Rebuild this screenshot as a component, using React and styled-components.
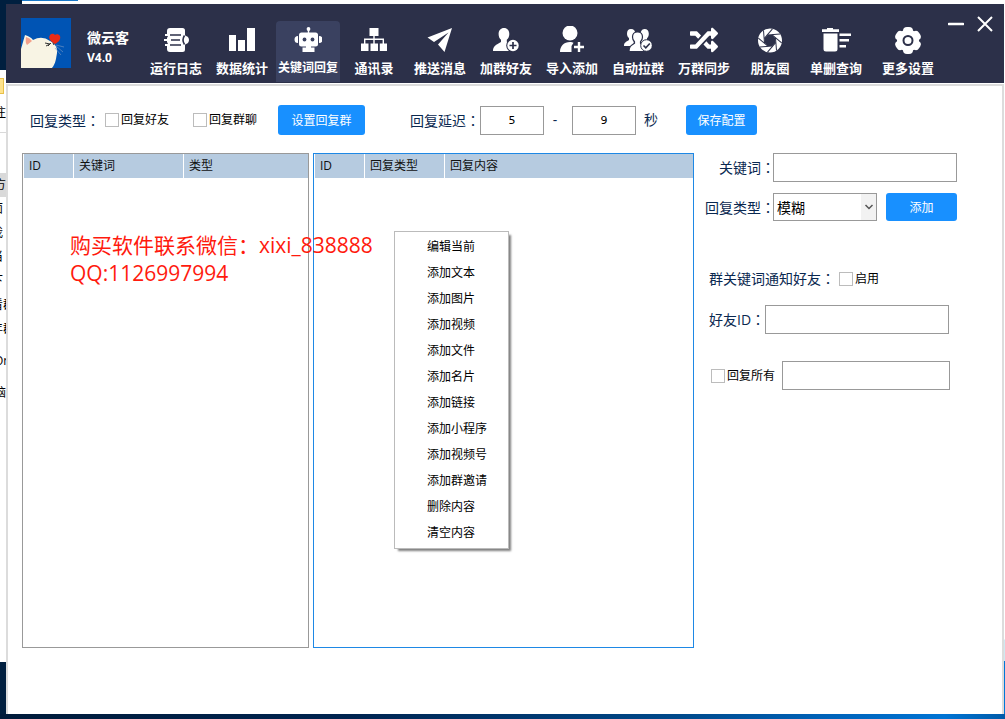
import React, { useState } from "react";
import styled, { createGlobalStyle } from "styled-components";
import { FaRandom } from "react-icons/fa";

const BAR = "#2c3049";

const LogIcon = () => (
  <svg width="28" height="28" viewBox="0 0 28 28">
    <path fill="#fff" d="M8 2h12.500a2.500 2.500 0 0 1 2.500 2.500V8.500a1.500 1.500 0 0 0 1 1.500c4 1 4 7 0 8a1.500 1.500 0 0 0-1 1.500v4a2.500 2.500 0 0 1-2.500 2.500H8a3 3 0 0 1-3-3v-3l1-2-1-2v-4l1-2-1-2V5a3 3 0 0 1 3-3z" />
    <path stroke={BAR} strokeWidth="1.600" fill="none" d="M7 9h12M9 14h9M7 19h12M22.500 9.500c-2 3-2 6 0 9" />
    <path stroke="#fff" strokeWidth="1.800" d="M3 9h5M2 14h6M3 19h5" />
  </svg>
);

const BarsIcon = () => (
  <svg width="28" height="28" viewBox="0 0 28 28" fill="#fff">
    <rect x="1" y="9" width="7" height="16" />
    <rect x="10" y="14" width="7" height="11" />
    <rect x="19" y="2" width="8" height="23" />
  </svg>
);

const RobotIcon = () => (
  <svg width="28" height="28" viewBox="0 0 28 28" fill="#fff">
    <circle cx="14.500" cy="3" r="1.900" />
    <rect x="13.800" y="3" width="1.400" height="4" />
    <rect x="5" y="6.500" width="19" height="14" rx="2.500" />
    <path d="M4 10v7a3.500 3.500 0 0 1 0-7zM25 10v7a3.500 3.500 0 0 0 0-7z" />
    <circle cx="10.500" cy="13.500" r="1.900" fill="#3a4160" />
    <circle cx="18.500" cy="13.500" r="1.900" fill="#3a4160" />
    <path d="M12 20h5v1.500h3.500V26h-12v-4.500H12z" />
  </svg>
);

const TreeIcon = () => (
  <svg width="28" height="28" viewBox="0 0 28 28" fill="#fff">
    <rect x="9.500" y="2" width="9" height="8" />
    <path d="M13.300 10h1.400v8h-1.400zM4 12.500h20V18h-1.400v-4H5.400v4H4z" />
    <rect x="1" y="17.500" width="7.500" height="7.500" />
    <rect x="10.500" y="17.500" width="7.500" height="7.500" />
    <rect x="19.800" y="17.500" width="7.200" height="7.500" />
  </svg>
);

const PlaneIcon = () => (
  <svg width="28" height="28" viewBox="0 0 28 28" fill="#fff">
    <path d="M26 2L1.500 11.500L8 16L22.500 6.500L12 18.500L18.500 26z" />
  </svg>
);

const FriendIcon = () => (
  <svg width="28" height="28" viewBox="0 0 28 28" fill="#fff">
    <path d="M12 2c3.300 0 5.300 2.500 5.300 6 0 2.500-1 4.600-2.500 5.800v2l3.200 2V25H1c0-5 3-6 8-9v-2.200C7.500 12.600 6.600 10.500 6.600 8c0-3.500 2.100-6 5.400-6z" />
    <circle cx="21" cy="19.500" r="6.800" fill={BAR} />
    <circle cx="21" cy="19.500" r="5.700" />
    <path stroke={BAR} strokeWidth="1.700" d="M17.500 19.500h7M21 16v7" />
  </svg>
);

const ImportIcon = () => (
  <svg width="28" height="28" viewBox="0 0 28 28" fill="#fff">
    <circle cx="12" cy="7" r="7.500" />
    <path d="M2 26c0-6 4-10 10-10 1.500 0 2.500.3 3.500.8L13.500 20v6z" />
    <path stroke="#fff" strokeWidth="2.400" d="M16 21h10M21 16v10" />
  </svg>
);

const GroupIcon = () => (
  <svg width="28" height="28" viewBox="0 0 28 28" fill="#fff">
    <path d="M7 3c2.800 0 4.300 2 4.300 4.700 0 2-.8 3.500-1.800 4.500L10 20H0c0-3.500 2-4 5-6v-2C3.700 11 3 9.500 3 7.700 3 5 4.200 3 7 3zM20.500 3c2.800 0 4.300 2 4.300 4.700 0 2-.8 3.500-1.800 4.500v1.500l4 3V20H17l-.5-9c-.7-5 1.200-8 4-8z" />
    <path stroke={BAR} strokeWidth="1.200" d="M13.500 6c3 0 5 2 5 5 0 2-.8 3.700-2 4.700v1.500c3 2 5.500 2.800 5.500 8.300H5c0-5.500 2.500-6.300 5.500-8.300v-1.500c-1.200-1-2-2.700-2-4.700 0-3 2-5 5-5z" />
    <circle cx="22.500" cy="19.500" r="5.800" stroke={BAR} />
    <path stroke={BAR} strokeWidth="1.600" fill="none" d="M19.500 19.500l2.300 2.300 4-4.300" />
  </svg>
);

const ShutterIcon = () => (
  <svg width="28" height="28" viewBox="0 0 28 28">
    <circle cx="14" cy="14.500" r="12" fill="#fff" />
    {[0, 45, 90, 135, 180, 225, 270, 315].map((deg) => (
      <path key={deg} transform={`rotate(${deg} 14 14.5)`} stroke={BAR} strokeWidth="1" d="M11.500 9L24 8" />
    ))}
    <path fill={BAR} d="M11.700 9h4.600l3.200 3.200v4.600L16.300 20h-4.600l-3.200-3.200v-4.600z" />
  </svg>
);

const TrashIcon = () => (
  <svg width="32" height="28" viewBox="0 0 32 28" fill="#fff">
    <path d="M7 2h6v1.200h6V6H2V3.200h5zM3.500 7.500h14V23a2.500 2.500 0 0 1-2.500 2.500H6A2.500 2.500 0 0 1 3.500 23z" />
    <path d="M19.500 7.500H31V10H19.500zM19.500 13H29v2.500h-9.500zM19.500 19H26v2.500h-6.500z" />
  </svg>
);

const GearIcon = () => (
  <svg width="28" height="28" viewBox="0 0 28 28" fill="#fff">
    <circle cx="14" cy="14.500" r="11" />
    {[0, 60, 120, 180, 240, 300].map((deg) => (
      <rect key={deg} transform={`rotate(${deg} 14 14.5)`} x="9" y="1" width="10" height="8" rx="4" />
    ))}
    <circle cx="14" cy="14.500" r="4.500" fill="none" stroke={BAR} strokeWidth="2" />
  </svg>
);

const Chevron = () => (
  <svg width="10" height="6" viewBox="0 0 10 6">
    <path d="M1.500 1L5 4.500 8.500 1" fill="none" stroke="#555" strokeWidth="1.500" />
  </svg>
);

const CatLogo = () => (
  <svg width="50" height="50" viewBox="0 0 50 50">
    <rect width="50" height="50" fill="#0054b4" />
    <path fill="#f8f4e4" d="M0 31L4 17q6 2 8 5 9-5 17 1c4 2 8 6 7 12-1 5-1 10-5 15H0z" />
    <path fill="#f3a08a" d="M5 19q4 1 6 4l-5 4q-2-3-1-8z" />
    <path fill="#ea2a14" d="M34 26c-5-3-7-6-5-9 2-2 4-1 5 0 1-1 4-1 5 1 1 3-1 6-5 8z" />
    <path stroke="#333" fill="none" d="M24 25l5 1-4 2M27 28l3-3M32 25l1 2" />
    <path stroke="#7f9cc4" strokeWidth=".6" fill="none" d="M35 28l7 6M34 30l6 7M35 27l8 2" />
  </svg>
);

const navItems = [
  { name: "运行日志", icon: <LogIcon /> },
  { name: "数据统计", icon: <BarsIcon /> },
  { name: "关键词回复", icon: <RobotIcon /> },
  { name: "通讯录", icon: <TreeIcon /> },
  { name: "推送消息", icon: <PlaneIcon /> },
  { name: "加群好友", icon: <FriendIcon /> },
  { name: "导入添加", icon: <ImportIcon /> },
  { name: "自动拉群", icon: <GroupIcon /> },
  { name: "万群同步", icon: <FaRandom size={28} /> },
  { name: "朋友圈", icon: <ShutterIcon /> },
  { name: "单删查询", icon: <TrashIcon /> },
  { name: "更多设置", icon: <GearIcon />, wide: true },
];

const menuItems = [
  "编辑当前", "添加文本", "添加图片", "添加视频", "添加文件", "添加名片",
  "添加链接", "添加小程序", "添加视频号", "添加群邀请", "删除内容", "清空内容",
];

const App = () => {
  const [active, setActive] = useState("关键词回复");
  const [min, setMin] = useState("5");
  const [max, setMax] = useState("9");

  return (
    <Desktop>
      <GlobalStyle />
      <TopEdge><span /></TopEdge>
      <Middle>
        <Behind>
          <BehindDark $h={66} />
          <Folder />
          <BehindText $h={38}>注</BehindText>
          <BehindLine />
          <BehindText $h={40} />
          <BehindText $on>方</BehindText>
          <BehindText $far>面</BehindText>
          <BehindText $far>我</BehindText>
          <BehindText $far>当</BehindText>
          <BehindText $far>下</BehindText>
          <BehindText $far>看群</BehindText>
          <BehindText $far>年群</BehindText>
          <BehindText $h={40}>OneDrive</BehindText>
          <BehindText>脑</BehindText>
          <BehindFill />
          <BehindDark $h={52} />
        </Behind>

        <Window>
          <TitleBar>
            <CatLogo />
            <Brand>
              <AppName>微云客</AppName>
              <Version>V4.0</Version>
            </Brand>
            <Nav>
              {navItems.map((item) => (
                <NavButton
                  key={item.name}
                  type="button"
                  $wide={item.wide}
                  $active={item.name === active}
                  onClick={() => setActive(item.name)}
                >
                  {item.icon}
                  {item.name}
                </NavButton>
              ))}
            </Nav>
            <WindowButtons>
              <IconButton type="button" aria-label="最小化">
                <svg width="16" height="16" viewBox="0 0 16 16">
                  <path d="M1 8h14" stroke="#fff" strokeWidth="2.600" strokeLinecap="round" />
                </svg>
              </IconButton>
              <IconButton type="button" aria-label="关闭">
                <svg width="16" height="16" viewBox="0 0 16 16">
                  <path d="M1 1l14 14M15 1L1 15" stroke="#fff" strokeWidth="2" />
                </svg>
              </IconButton>
            </WindowButtons>
          </TitleBar>

          <Content>
            <Toolbar>
              <Text>回复类型<Colon>：</Colon></Text>
              <CheckGroup>
                <CheckLabel><Check type="checkbox" />回复好友</CheckLabel>
                <CheckLabel><Check type="checkbox" />回复群聊</CheckLabel>
              </CheckGroup>
              <Button type="button" $w={87}>设置回复群</Button>
              <Delay>
                <Text as="label" htmlFor="min">回复延迟<Colon>：</Colon></Text>
                <NumberBox id="min" value={min} onChange={(e) => setMin(e.target.value)} />
                <Dash>-</Dash>
                <NumberBox aria-label="最大延迟" value={max} onChange={(e) => setMax(e.target.value)} />
                <Unit>秒</Unit>
              </Delay>
              <Button type="button" $w={71}>保存配置</Button>
            </Toolbar>

            <Main>
              <Panel>
                <Table>
                  <thead>
                    <tr>
                      <Th $w={50}>ID</Th>
                      <Th $w={110}>关键词</Th>
                      <Th>类型</Th>
                    </tr>
                  </thead>
                </Table>
                <Notice>
                  购买软件联系微信：xixi_838888
                  <br />
                  QQ:1126997994
                </Notice>
              </Panel>

              <Panel $focus>
                <Table>
                  <thead>
                    <tr>
                      <Th $w={50}>ID</Th>
                      <Th $w={80}>回复类型</Th>
                      <Th>回复内容</Th>
                    </tr>
                  </thead>
                </Table>
                <Menu>
                  {menuItems.map((name) => (
                    <li key={name}>
                      <MenuItem type="button">{name}</MenuItem>
                    </li>
                  ))}
                </Menu>
              </Panel>

              <Side>
                <FormRows>
                  <Row>
                    <FormLabel htmlFor="keyword">关键词<Colon>：</Colon></FormLabel>
                    <Input id="keyword" $w={184} />
                  </Row>
                  <Row>
                    <FormLabel htmlFor="type">回复类型<Colon>：</Colon></FormLabel>
                    <SelectBox>
                      <Select id="type" defaultValue="模糊">
                        <option>模糊</option>
                        <option>精确</option>
                      </Select>
                      <Arrow><Chevron /></Arrow>
                    </SelectBox>
                    <AddButton type="button" $w={71}>添加</AddButton>
                  </Row>
                </FormRows>

                <NotifyRows>
                  <Row>
                    <Text>群关键词通知好友<Colon>：</Colon></Text>
                    <CheckLabel><Check type="checkbox" />启用</CheckLabel>
                  </Row>
                  <Row>
                    <Text as="label" htmlFor="friend">好友ID<Colon>：</Colon></Text>
                    <Input id="friend" $w={184} />
                  </Row>
                </NotifyRows>

                <ReplyAll>
                  <CheckLabel><Check type="checkbox" />回复所有</CheckLabel>
                  <Input aria-label="回复所有" $w={168} />
                </ReplyAll>
              </Side>
            </Main>
          </Content>
        </Window>
        <RightEdge />
      </Middle>
      <BottomEdge />
    </Desktop>
  );
};

export default App;

const GlobalStyle = createGlobalStyle`
  * {
    box-sizing: border-box;
  }
  body {
    margin: 0;
    background: #fff;
    color: #000;
    font-family: "Open Sans", "Noto Sans CJK SC", sans-serif;
    font-size: 12px;
  }
  button, input, select {
    font-family: inherit;
    font-size: 12px;
  }
`

const Desktop = styled.div`
  min-height: 100vh;
  display: flex;
  flex-direction: column;
  overflow: hidden;
`

/* what is visible of the desktop around the window */
const TopEdge = styled.div`
  height: 4px;
  padding-left: 22px;
  background: linear-gradient(90deg, #001f3f 22px, #fff 22px);
  span {
    display: block;
    width: 56px;
    height: 1px;
    background: #1979ca;
  }
`
const Middle = styled.div`
  flex: 1;
  display: flex;
`
const Behind = styled.div`
  width: 6px;
  flex: none;
  overflow: hidden;
  display: flex;
  flex-direction: column;
`
const BehindDark = styled.div`
  height: ${(props) => props.$h}px;
  background: #001f3f;
`
const Folder = styled.div`
  width: 4px;
  height: 16px;
  margin-top: 8px;
  background: #ffe38c;
  border: 1px solid #e8c04a;
  border-left: none;
`
const BehindText = styled.div`
  height: ${(props) => props.$h || 24}px;
  line-height: ${(props) => props.$h || 24}px;
  text-indent: ${(props) => (props.$far ? -9 : -6)}px;
  white-space: nowrap;
  background: ${(props) => (props.$on ? "#d9d9d9" : "#fff")};
`
const BehindLine = styled.div`
  height: 1px;
  background: #d9d9d9;
`
const BehindFill = styled.div`
  flex: 1;
`
const RightEdge = styled.div`
  width: 1px;
  flex: none;
  background: linear-gradient(0deg, #0078d7 53px, #cfe9f1 53px, #cfe9f1 74px, #fff 75px);
`
const BottomEdge = styled.div`
  height: 5px;
  background: linear-gradient(90deg, #001b3a, #002450 35%, #004a8c 68%, #0062b8 82%, #0074d4 94%, #005aa8);
`

const Window = styled.div`
  flex: 1;
  min-width: 0;
  display: flex;
  flex-direction: column;
`
const TitleBar = styled.header`
  height: 79px;
  padding: 0 11px 1px 15px;
  display: flex;
  align-items: center;
  background: ${BAR};
  color: #fff;
  > svg {
    flex: none;
  }
`
const Brand = styled.div`
  width: 57px;
  flex: none;
  margin-left: 16px;
  padding-top: 10px;
  font-weight: 700;
`
const AppName = styled.div`
  font-size: 14px;
  line-height: 20px;
`
const Version = styled.div`
  line-height: 20px;
`
const Nav = styled.nav`
  display: flex;
  gap: 2px;
  align-self: flex-end;
`
const NavButton = styled.button`
  width: ${(props) => (props.$wide ? 76 : 64)}px;
  height: 61px;
  padding: 5px 0 0;
  display: flex;
  flex-direction: column;
  align-items: center;
  gap: 5px;
  border: none;
  border-radius: 4px 4px 0 0;
  background: ${(props) => (props.$active ? "#3a4160" : "transparent")};
  color: #fff;
  font-size: ${(props) => (props.$active ? 12 : 13)}px;
  font-weight: 700;
  line-height: 18px;
  white-space: nowrap;
`
const WindowButtons = styled.div`
  display: flex;
  gap: 13px;
  align-self: flex-start;
  margin-left: auto;
  padding-top: 12px;
`
const IconButton = styled.button`
  width: 16px;
  height: 16px;
  padding: 0;
  border: none;
  background: none;
  line-height: 0;
`

const Content = styled.main`
  flex: 1;
  display: flex;
  flex-direction: column;
  gap: 18px;
  margin-top: 1px;
  padding: 19px 0 66px 14px;
  border: 2px solid #dcdcdc;
  border-bottom: none;
`
const Toolbar = styled.div`
  height: 30px;
  padding-left: 8px;
  display: flex;
  align-items: center;
`
const Text = styled.span`
  color: #0a2850;
  font-size: 14px;
  line-height: 20px;
  white-space: nowrap;
`
const Colon = styled.span`
  font-family: "Noto Sans CJK TC", sans-serif;
`
const CheckGroup = styled.div`
  display: flex;
  gap: 24px;
  margin: 0 21px 0 5px;
`
const CheckLabel = styled.label`
  display: flex;
  align-items: center;
  gap: 2px;
  line-height: 20px;
  white-space: nowrap;
`
const Check = styled.input`
  appearance: none;
  width: 14px;
  height: 14px;
  margin: 0;
  border: 1px solid #bcbcbc;
  background: #fff;
  &:checked {
    background: #1890ff;
  }
`
const Button = styled.button`
  width: ${(props) => props.$w}px;
  height: 30px;
  padding: 0;
  border: none;
  border-radius: 3px;
  background: #1890ff;
  color: #fff;
`
const AddButton = styled(Button)`
  height: 28px;
  margin-left: 9px;
`
const Delay = styled.div`
  display: flex;
  align-items: center;
  margin: 0 28px 0 45px;
`
const Input = styled.input`
  width: ${(props) => props.$w}px;
  height: 29px;
  padding: 0 4px;
  border: 1px solid #999;
  border-radius: 0;
  background: #fff;
`
const NumberBox = styled(Input).attrs({ $w: 64 })`
  text-align: center;
  font-family: "DejaVu Sans", sans-serif;
  font-size: 11px;
`
const Dash = styled(Text)`
  width: 28px;
  padding-right: 6px;
  text-align: center;
`
const Unit = styled(Text)`
  margin-left: 8px;
`

const Main = styled.div`
  flex: 1;
  display: grid;
  grid-template-columns: 287fr 4px 381fr 308px;
  > :nth-child(2) {
    grid-column: 3;
  }
`
const Panel = styled.section`
  position: relative;
  min-height: 400px;
  border: 1px solid ${(props) => (props.$focus ? "#1e88e5" : "#999")};
`
const Table = styled.table`
  width: 100%;
  table-layout: fixed;
  border-collapse: separate;
  border-spacing: 0;
`
const Th = styled.th`
  width: ${(props) => (props.$w ? props.$w + "px" : "auto")};
  height: 24px;
  padding: 0 5px;
  border-left: 1px solid #fff;
  background: #b6cbe0;
  color: #111;
  font-weight: 400;
  line-height: 20px;
  text-align: left;
`
const Notice = styled.p`
  position: absolute;
  z-index: 1;
  top: 77px;
  left: 47px;
  margin: 0;
  color: #ff1a0e;
  font-size: 21px;
  line-height: 28px;
  white-space: nowrap;
`
const Menu = styled.ul`
  position: absolute;
  z-index: 2;
  top: 77px;
  left: 80px;
  width: 115px;
  margin: 0;
  padding: 2px 0;
  list-style: none;
  border: 1px solid #bbb;
  background: #fff;
  box-shadow: 3px 3px 2px -1px rgba(0, 0, 0, 0.5);
`
const MenuItem = styled.button`
  display: block;
  width: 100%;
  height: 26px;
  padding: 0 0 0 32px;
  border: none;
  background: none;
  color: #000;
  text-align: left;
  line-height: 26px;
  &:hover {
    background: #e6f2fc;
  }
`

const Side = styled.form`
  padding-left: 11px;
`
const Row = styled.div`
  display: flex;
  align-items: center;
`
const FormRows = styled.div`
  display: flex;
  flex-direction: column;
  gap: 11px;
`
const FormLabel = styled.label`
  width: 70px;
  margin-right: -2px;
  color: #0a2850;
  font-size: 14px;
  line-height: 20px;
  text-align: right;
  white-space: nowrap;
`
const SelectBox = styled.div`
  position: relative;
  width: 104px;
`
const Select = styled.select`
  appearance: none;
  display: block;
  width: 100%;
  height: 28px;
  padding: 0 20px 0 3px;
  border: 1px solid #999;
  border-radius: 0;
  background: #fff;
  color: #000;
  font-size: 14px;
`
const Arrow = styled.span`
  position: absolute;
  top: 1px;
  right: 1px;
  bottom: 1px;
  width: 15px;
  display: flex;
  align-items: center;
  justify-content: center;
  background: #f2f2f2;
  pointer-events: none;
`
const NotifyRows = styled.div`
  display: flex;
  flex-direction: column;
  gap: 16px;
  margin-top: 47px;
  padding-left: 4px;
  ${CheckLabel} {
    margin-left: 4px;
  }
`
const ReplyAll = styled(Row)`
  gap: 7px;
  margin-top: 27px;
  padding-left: 6px;
`
